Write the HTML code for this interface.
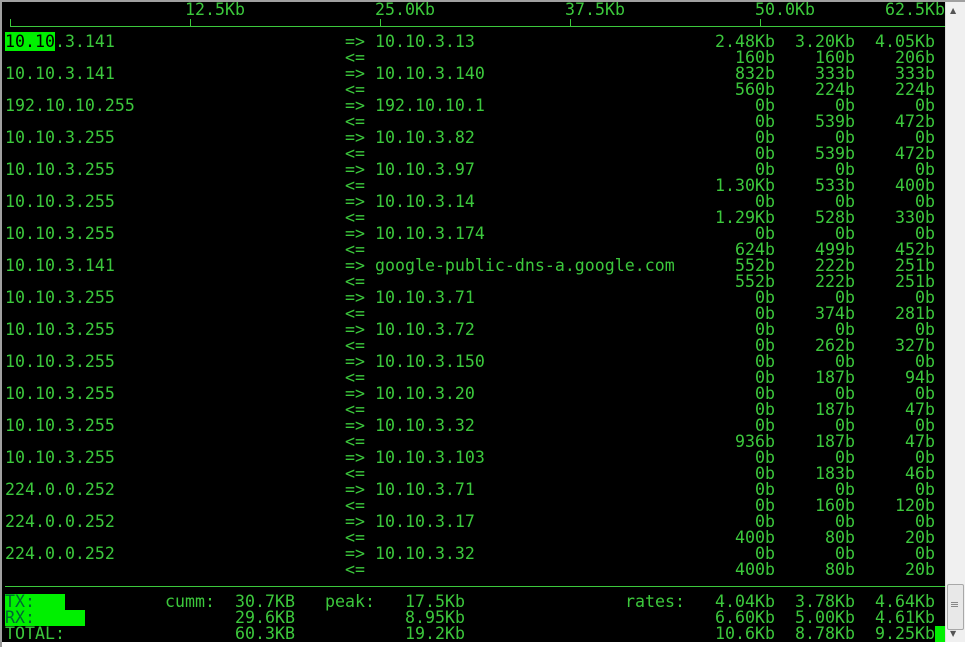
<!DOCTYPE html>
<html><head><meta charset="utf-8"><style>
html,body{margin:0;padding:0;width:965px;height:647px;overflow:hidden;background:#fff}
#t{position:absolute;left:2px;top:2px;width:943px;height:640px;background:#000}
#bl{position:absolute;left:0;top:0;width:965px;height:2px;background:#a0a0a0}
#ll{position:absolute;left:0;top:0;width:2px;height:647px;background:#a0a0a0}
.r{position:absolute;left:0;width:965px;height:16px;line-height:16px;font-family:"DejaVu Sans Mono","Liberation Mono",monospace;font-size:16.6px;color:#3cc83c;white-space:pre}
.r span{position:absolute;top:0}
.a{left:5px}.b{left:345px}.c{left:375px}
.v1{right:190px}.v2{right:110px}.v3{right:30px}
.hl{background:#00f000;color:#000}
.hr{position:absolute;height:1px;background:#3cc83c}
.tk{position:absolute;width:1px;height:7px;top:19px;background:#3cc83c}
#sb{position:absolute;left:945px;top:2px;width:20px;height:640px;background:#f0f0f0;border-left:1px solid #ddd}
#th{position:absolute;left:947px;top:584px;width:15px;height:44px;background:#e8e8e8;border:1px solid #a8a8a8;border-radius:2px}
</style></head><body>
<div id="t"></div><div id="bl"></div><div id="ll"></div>
<div id="sb"></div><div id="th"></div>
<div style="position:absolute;left:950px;top:6px;font-size:8px;color:#555;font-family:'DejaVu Sans',sans-serif">▲</div>
<div style="position:absolute;left:950px;top:629px;font-size:8px;color:#555;font-family:'DejaVu Sans',sans-serif">▼</div>
<div style="position:absolute;left:951px;top:602px;width:7px;height:1px;background:#888;box-shadow:0 2px 0 #888,0 4px 0 #888"></div>

<div class="r" style="top:2px"><span style="left:185px">12.5Kb</span><span style="left:375px">25.0Kb</span><span style="left:565px">37.5Kb</span><span style="left:755px">50.0Kb</span><span style="left:885px">62.5Kb</span></div>
<div class="hr" style="left:10px;top:26px;width:935px"></div>
<div class="tk" style="left:10px"></div><div class="tk" style="left:190px"></div><div class="tk" style="left:380px"></div><div class="tk" style="left:570px"></div><div class="tk" style="left:760px"></div>

<div class="r" style="top:34px"><span class="a"><span class="hl" style="position:static">10.10</span>.3.141</span><span class="b">=&gt;</span><span class="c">10.10.3.13</span><span class="v1">2.48Kb</span><span class="v2">3.20Kb</span><span class="v3">4.05Kb</span></div>
<div class="r" style="top:50px"><span class="b">&lt;=</span><span class="v1">160b</span><span class="v2">160b</span><span class="v3">206b</span></div>
<div class="r" style="top:66px"><span class="a">10.10.3.141</span><span class="b">=&gt;</span><span class="c">10.10.3.140</span><span class="v1">832b</span><span class="v2">333b</span><span class="v3">333b</span></div>
<div class="r" style="top:82px"><span class="b">&lt;=</span><span class="v1">560b</span><span class="v2">224b</span><span class="v3">224b</span></div>
<div class="r" style="top:98px"><span class="a">192.10.10.255</span><span class="b">=&gt;</span><span class="c">192.10.10.1</span><span class="v1">0b</span><span class="v2">0b</span><span class="v3">0b</span></div>
<div class="r" style="top:114px"><span class="b">&lt;=</span><span class="v1">0b</span><span class="v2">539b</span><span class="v3">472b</span></div>
<div class="r" style="top:130px"><span class="a">10.10.3.255</span><span class="b">=&gt;</span><span class="c">10.10.3.82</span><span class="v1">0b</span><span class="v2">0b</span><span class="v3">0b</span></div>
<div class="r" style="top:146px"><span class="b">&lt;=</span><span class="v1">0b</span><span class="v2">539b</span><span class="v3">472b</span></div>
<div class="r" style="top:162px"><span class="a">10.10.3.255</span><span class="b">=&gt;</span><span class="c">10.10.3.97</span><span class="v1">0b</span><span class="v2">0b</span><span class="v3">0b</span></div>
<div class="r" style="top:178px"><span class="b">&lt;=</span><span class="v1">1.30Kb</span><span class="v2">533b</span><span class="v3">400b</span></div>
<div class="r" style="top:194px"><span class="a">10.10.3.255</span><span class="b">=&gt;</span><span class="c">10.10.3.14</span><span class="v1">0b</span><span class="v2">0b</span><span class="v3">0b</span></div>
<div class="r" style="top:210px"><span class="b">&lt;=</span><span class="v1">1.29Kb</span><span class="v2">528b</span><span class="v3">330b</span></div>
<div class="r" style="top:226px"><span class="a">10.10.3.255</span><span class="b">=&gt;</span><span class="c">10.10.3.174</span><span class="v1">0b</span><span class="v2">0b</span><span class="v3">0b</span></div>
<div class="r" style="top:242px"><span class="b">&lt;=</span><span class="v1">624b</span><span class="v2">499b</span><span class="v3">452b</span></div>
<div class="r" style="top:258px"><span class="a">10.10.3.141</span><span class="b">=&gt;</span><span class="c">google-public-dns-a.google.com</span><span class="v1">552b</span><span class="v2">222b</span><span class="v3">251b</span></div>
<div class="r" style="top:274px"><span class="b">&lt;=</span><span class="v1">552b</span><span class="v2">222b</span><span class="v3">251b</span></div>
<div class="r" style="top:290px"><span class="a">10.10.3.255</span><span class="b">=&gt;</span><span class="c">10.10.3.71</span><span class="v1">0b</span><span class="v2">0b</span><span class="v3">0b</span></div>
<div class="r" style="top:306px"><span class="b">&lt;=</span><span class="v1">0b</span><span class="v2">374b</span><span class="v3">281b</span></div>
<div class="r" style="top:322px"><span class="a">10.10.3.255</span><span class="b">=&gt;</span><span class="c">10.10.3.72</span><span class="v1">0b</span><span class="v2">0b</span><span class="v3">0b</span></div>
<div class="r" style="top:338px"><span class="b">&lt;=</span><span class="v1">0b</span><span class="v2">262b</span><span class="v3">327b</span></div>
<div class="r" style="top:354px"><span class="a">10.10.3.255</span><span class="b">=&gt;</span><span class="c">10.10.3.150</span><span class="v1">0b</span><span class="v2">0b</span><span class="v3">0b</span></div>
<div class="r" style="top:370px"><span class="b">&lt;=</span><span class="v1">0b</span><span class="v2">187b</span><span class="v3">94b</span></div>
<div class="r" style="top:386px"><span class="a">10.10.3.255</span><span class="b">=&gt;</span><span class="c">10.10.3.20</span><span class="v1">0b</span><span class="v2">0b</span><span class="v3">0b</span></div>
<div class="r" style="top:402px"><span class="b">&lt;=</span><span class="v1">0b</span><span class="v2">187b</span><span class="v3">47b</span></div>
<div class="r" style="top:418px"><span class="a">10.10.3.255</span><span class="b">=&gt;</span><span class="c">10.10.3.32</span><span class="v1">0b</span><span class="v2">0b</span><span class="v3">0b</span></div>
<div class="r" style="top:434px"><span class="b">&lt;=</span><span class="v1">936b</span><span class="v2">187b</span><span class="v3">47b</span></div>
<div class="r" style="top:450px"><span class="a">10.10.3.255</span><span class="b">=&gt;</span><span class="c">10.10.3.103</span><span class="v1">0b</span><span class="v2">0b</span><span class="v3">0b</span></div>
<div class="r" style="top:466px"><span class="b">&lt;=</span><span class="v1">0b</span><span class="v2">183b</span><span class="v3">46b</span></div>
<div class="r" style="top:482px"><span class="a">224.0.0.252</span><span class="b">=&gt;</span><span class="c">10.10.3.71</span><span class="v1">0b</span><span class="v2">0b</span><span class="v3">0b</span></div>
<div class="r" style="top:498px"><span class="b">&lt;=</span><span class="v1">0b</span><span class="v2">160b</span><span class="v3">120b</span></div>
<div class="r" style="top:514px"><span class="a">224.0.0.252</span><span class="b">=&gt;</span><span class="c">10.10.3.17</span><span class="v1">0b</span><span class="v2">0b</span><span class="v3">0b</span></div>
<div class="r" style="top:530px"><span class="b">&lt;=</span><span class="v1">400b</span><span class="v2">80b</span><span class="v3">20b</span></div>
<div class="r" style="top:546px"><span class="a">224.0.0.252</span><span class="b">=&gt;</span><span class="c">10.10.3.32</span><span class="v1">0b</span><span class="v2">0b</span><span class="v3">0b</span></div>
<div class="r" style="top:562px"><span class="b">&lt;=</span><span class="v1">400b</span><span class="v2">80b</span><span class="v3">20b</span></div>

<div class="hr" style="left:5px;top:586px;width:940px"></div>
<div style="position:absolute;left:5px;top:594px;width:60px;height:16px;background:#00f000"></div>
<div style="position:absolute;left:5px;top:610px;width:80px;height:16px;background:#00f000"></div>
<div class="r" style="top:594px"><span class="a" style="color:#063">TX:</span><span style="left:165px">cumm:</span><span style="right:670px">30.7KB</span><span style="left:325px">peak:</span><span style="right:500px">17.5Kb</span><span style="left:625px">rates:</span><span class="v1">4.04Kb</span><span class="v2">3.78Kb</span><span class="v3">4.64Kb</span></div>
<div class="r" style="top:610px"><span class="a" style="color:#063">RX:</span><span style="right:670px">29.6KB</span><span style="right:500px">8.95Kb</span><span class="v1">6.60Kb</span><span class="v2">5.00Kb</span><span class="v3">4.61Kb</span></div>
<div class="r" style="top:626px"><span class="a">TOTAL:</span><span style="right:670px">60.3KB</span><span style="right:500px">19.2Kb</span><span class="v1">10.6Kb</span><span class="v2">8.78Kb</span><span class="v3">9.25Kb</span></div>
<div style="position:absolute;left:935px;top:626px;width:10px;height:16px;background:#00f000"></div>
</body></html>
